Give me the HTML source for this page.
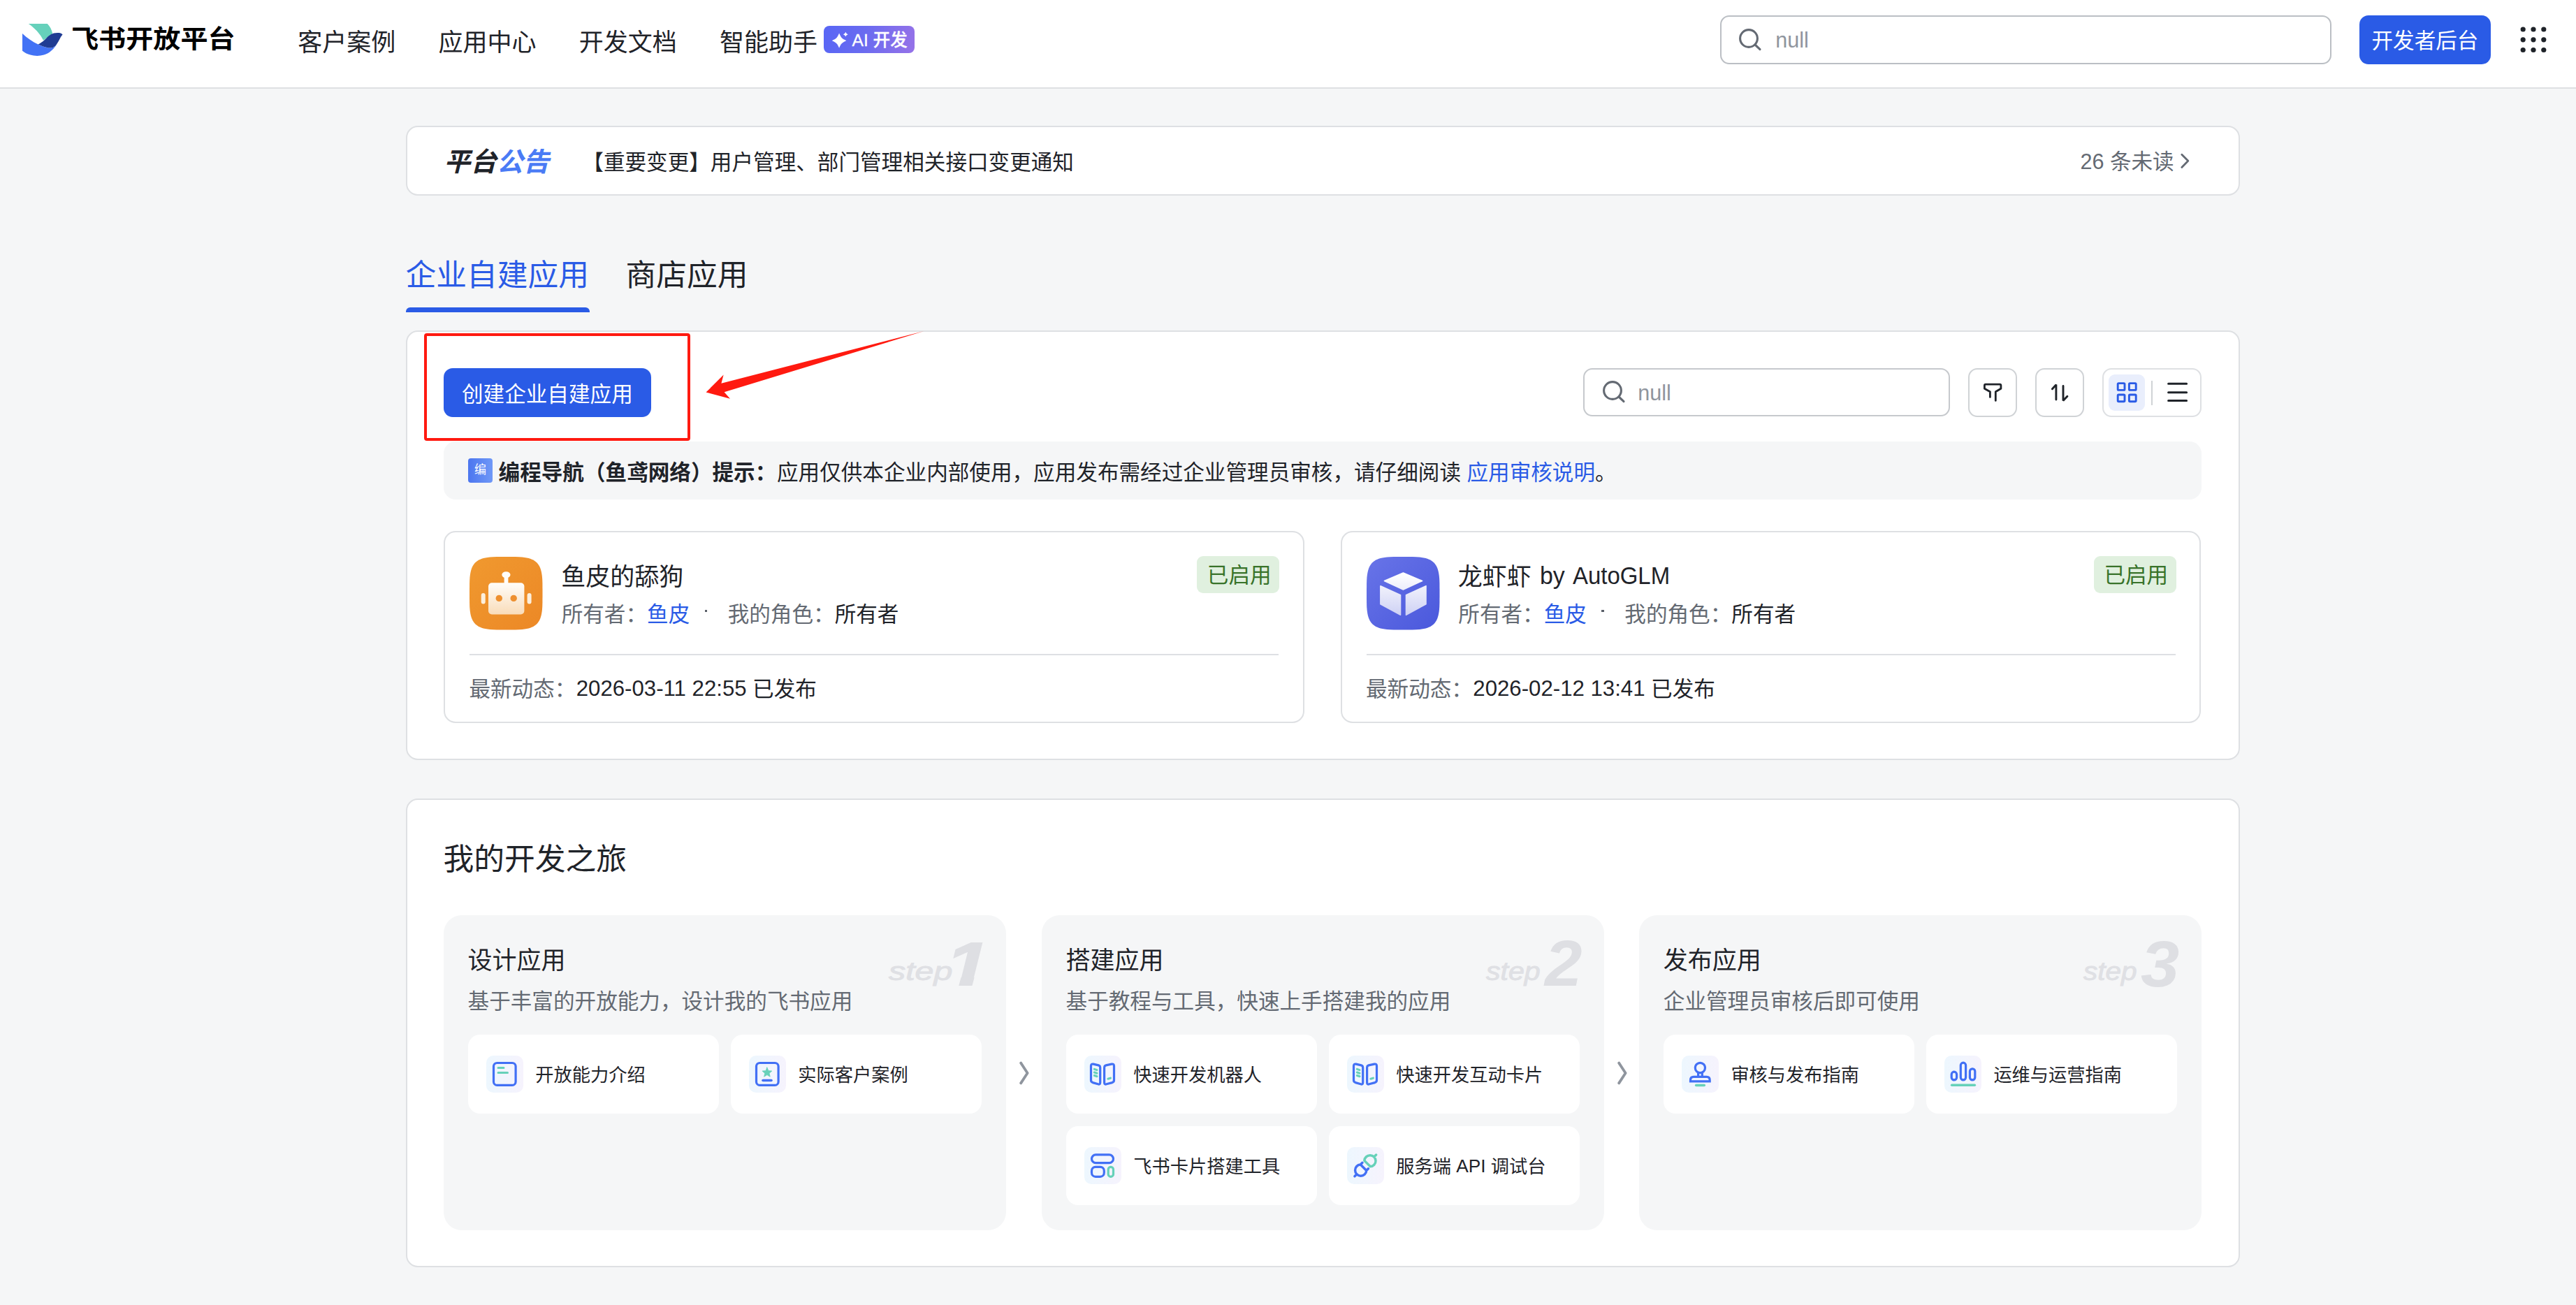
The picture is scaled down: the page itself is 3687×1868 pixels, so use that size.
<!DOCTYPE html>
<html lang="zh-CN">
<head>
<meta charset="utf-8">
<title>飞书开放平台</title>
<style>
*{box-sizing:border-box;margin:0;padding:0}
html,body{width:3687px;height:1868px;overflow:hidden;background:#f5f6f7}
body{position:relative;font-family:"Liberation Sans","Noto Sans CJK SC",sans-serif;color:#1f2329}
.a{position:absolute}
.t{position:absolute;white-space:nowrap;line-height:1}
.f35{font-size:35px}
.f30{font-size:30.6px}
.f26{font-size:26.25px}
.f43{font-size:43.75px}
.g{color:#646a73}
.b{color:#2a5be6}
.n{position:relative;top:-1.6px;font-size:31.2px}
.card{position:absolute;background:#fff;border:2px solid #dee0e3;border-radius:17px}
svg{position:absolute;overflow:visible}
#hd{left:0;top:0;width:3687px;height:127px;background:#fff;border-bottom:2px solid #dee0e3}
.sbox{position:absolute;background:#fff;border:2px solid #bbbfc4;border-radius:13px}
.btn{position:absolute;background:#2a5be6;border-radius:13px;color:#fff}
.ibtn{position:absolute;background:#fff;border:2px solid #d0d3d6;border-radius:13px}
.panel{position:absolute;background:#f5f6f7;border-radius:26px;top:1310px;height:450.5px;width:804.7px}
.item{position:absolute;background:#fff;border-radius:17px;width:358.6px;height:112.6px}
.ibg{position:absolute;left:26.3px;top:30px;width:52.5px;height:52.5px;border-radius:10px;background:linear-gradient(90deg,#edf7fe 0%,#f6f3fd 100%)}
.item .t{left:96.2px;top:45.1px;font-size:26.25px}
.ibg svg{left:0;top:0;width:52.5px;height:52.5px}
.tag{position:absolute;background:#e0f0df;border-radius:9px;width:118px;height:53px;color:#38732a;font-size:30.6px;line-height:1;white-space:nowrap;padding:12px 0 0 14.8px}
.step{position:absolute;white-space:nowrap;line-height:1;font-style:italic;color:#dfe0e4}
.num{font-weight:bold;font-size:89px;color:#dedfe3;transform-origin:0 0}
</style>
</head>
<body>
<div id="hd" class="a"></div>
<svg class="a" style="left:0;top:0" width="120" height="120" viewBox="0 0 120 120">
 <path d="M40.8 34.1 L67.8 34.1 C71.5 37.5 74 43 75.2 47.9 L62 57.7 C57.5 48.5 49.5 40 40.8 34.1 Z" fill="#66d1bb"/>
 <path d="M32 47.9 C39 54.5 46.5 59.5 54.6 63.5 C60 66.2 65 67.8 69 68.4 C72.5 68.9 75 68.4 77.6 67.2 L82 62 C78 69.5 70.5 76.5 62.9 78.6 C56 80.6 49 80.2 43.5 78.6 C39 77.3 35 75.2 32 72.7 Z" fill="#4272f5"/>
 <path d="M54.6 63.5 C58 61.8 60.5 60 62.9 58 C65.5 55.8 67 53.6 69.6 51.6 C72 49.7 74.5 48.3 77 47.6 C79.5 46.9 82 46.8 84.4 47 C86.5 47.3 88.3 48.2 89.6 49.4 C87.5 51.5 86.2 54.2 85 56.8 C83.8 59.2 82.7 61.2 81.3 62.9 C80 64.7 78.6 66.2 77 67.2 C74.7 68.6 72 68.8 69 68.4 C66.3 68 64 67.5 61.7 66.6 C59.3 65.7 56.9 64.6 54.6 63.5 Z" fill="#203c93"/>
</svg>
<div class="t" style="left:101.5px;top:37.5px;font-size:38.8px;font-weight:bold;color:#000;transform:scale(1.008,.94);transform-origin:0 50%">飞书开放平台</div>
<div class="t f35" style="left:426.2px;top:42.7px">客户案例</div>
<div class="t f35" style="left:627.5px;top:42.7px">应用中心</div>
<div class="t f35" style="left:828.7px;top:42.7px">开发文档</div>
<div class="t f35" style="left:1030px;top:42.7px">智能助手</div>
<div class="a" style="left:1179px;top:37px;width:130px;height:39px;border-radius:8px;background:linear-gradient(100deg,#5866f5 0%,#6a6bf0 45%,#9672e8 100%)"></div>
<svg style="left:0;top:0" width="1400" height="120" viewBox="0 0 1400 120"><path d="M1201.1 47.6 C1203.984 54.3416 1204.8491999999999 55.232 1211.3999999999999 58.2 C1204.8491999999999 61.168000000000006 1203.984 62.058400000000006 1201.1 68.8 C1198.216 62.058400000000006 1197.3508 61.168000000000006 1190.8 58.2 C1197.3508 55.232 1198.216 54.3416 1201.1 47.6 Z" fill="#fff"/><path d="M1210.3 45.800000000000004 C1211.252 47.9624 1211.5375999999999 48.248000000000005 1213.7 49.2 C1211.5375999999999 50.152 1211.252 50.4376 1210.3 52.6 C1209.348 50.4376 1209.0624 50.152 1206.8999999999999 49.2 C1209.0624 48.248000000000005 1209.348 47.9624 1210.3 45.800000000000004 Z" fill="#fff"/></svg>
<div class="t" style="left:1219.5px;top:46px;color:#fff;font-size:24.6px;font-weight:500;-webkit-text-stroke:.3px #fff">AI 开发</div>
<div class="sbox" style="left:2462px;top:22px;width:874.5px;height:69.5px"></div>
<svg style="left:2485px;top:38px" width="40" height="40" viewBox="0 0 40 40"><circle cx="18" cy="17" r="12.4" fill="none" stroke="#646a73" stroke-width="3.1"/><path d="M27 26 L34 32.6" stroke="#646a73" stroke-width="3.1" stroke-linecap="round"/></svg>
<div class="t f30" style="left:2541.3px;top:42.4px;color:#8f959e">null</div>
<div class="btn" style="left:3377px;top:22px;width:188px;height:69.6px"></div>
<div class="t f30" style="left:3394.5px;top:42.6px;color:#fff">开发者后台</div>
<svg style="left:3600px;top:30px" width="56" height="56" viewBox="0 0 56 56" fill="#1f2329">
 <circle cx="11.2" cy="12" r="3.6"/><circle cx="26" cy="12" r="3.6"/><circle cx="40.8" cy="12" r="3.6"/>
 <circle cx="11.2" cy="26.8" r="3.6"/><circle cx="26" cy="26.8" r="3.6"/><circle cx="40.8" cy="26.8" r="3.6"/>
 <circle cx="11.2" cy="41.5" r="3.6"/><circle cx="26" cy="41.5" r="3.6"/><circle cx="40.8" cy="41.5" r="3.6"/>
</svg>
<!-- ANNOUNCEMENT -->
<div class="card" style="left:581px;top:180px;width:2625px;height:99.5px"></div>
<div class="t" style="left:635.5px;top:213.7px;font-size:37.7px;font-weight:bold;font-style:italic;color:#1f2329">平台<span style="color:#4a7bf5">公告</span></div>
<div class="t f30" style="left:833.3px;top:216.9px">【重要变更】用户管理、部门管理相关接口变更通知</div>
<div class="t f30 g" style="left:2977.4px;top:216.3px">26 条未读</div>
<svg style="left:3116px;top:214px" width="24" height="32" viewBox="0 0 24 32"><path d="M6.8 7.2 L15.8 16.3 L6.8 25.4" fill="none" stroke="#646a73" stroke-width="2.8" stroke-linecap="round" stroke-linejoin="round"/></svg>
<!-- TABS -->
<div class="t f43 b" style="left:580.5px;top:371.5px">企业自建应用</div>
<div class="t f43" style="left:895.5px;top:371.5px">商店应用</div>
<div class="a" style="left:581px;top:440px;width:262.5px;height:6.5px;background:#2a5be6;border-radius:6px 6px 0 0"></div>
<!-- MAIN CARD -->
<div class="card" style="left:581px;top:473px;width:2625px;height:614.5px"></div>
<div class="btn" style="left:634.8px;top:527px;width:297.4px;height:70px"></div>
<div class="t f30" style="left:661px;top:548.6px;color:#fff">创建企业自建应用</div>
<div class="a" style="left:606.6px;top:477.3px;width:381px;height:154px;border:4.6px solid #ff1a10;border-radius:4px"></div>
<svg style="left:0;top:0" width="3687" height="700" viewBox="0 0 3687 700"><path d="M1010.5 561.6 L1035.6 536.6 L1032.4 548.7 L1322.4 474 L1036.6 561.3 L1045 570.8 Z" fill="#ff1a10"/></svg>
<div class="sbox" style="left:2266.3px;top:527.2px;width:524.6px;height:69.2px;border-color:#c6c9cd"></div>
<svg style="left:2289.5px;top:541.7px" width="40" height="40" viewBox="0 0 40 40"><circle cx="18" cy="17" r="12.4" fill="none" stroke="#646a73" stroke-width="3.1"/><path d="M27 26 L34 32.6" stroke="#646a73" stroke-width="3.1" stroke-linecap="round"/></svg>
<div class="t f30" style="left:2344.3px;top:546.9px;color:#8f959e">null</div>
<div class="ibtn" style="left:2817px;top:527.3px;width:69.6px;height:69.4px"></div>
<svg style="left:2817px;top:527.3px" width="70" height="70" viewBox="0 0 70 70"><path d="M24.9 23.2 L45.4 23.2 Q46.9 23.2 46.9 24.7 L46.9 29.2 L39.3 33.8 L39.3 46.4 M31.4 41.4 L31.4 33.8 L23.4 29.2 L23.4 24.7 Q23.4 23.2 24.9 23.2" fill="none" stroke="#1f2329" stroke-width="2.8" stroke-linecap="round" stroke-linejoin="round"/></svg>
<div class="ibtn" style="left:2913.3px;top:527.3px;width:69.6px;height:69.4px"></div>
<svg style="left:2913.3px;top:527.3px" width="70" height="70" viewBox="0 0 70 70"><path d="M29.9 45 L29.9 23.6 L24.4 29.8 M40 25.4 L40 46.4 L45.9 40.2" fill="none" stroke="#1f2329" stroke-width="2.9" stroke-linecap="round" stroke-linejoin="bevel"/></svg>
<div class="ibtn" style="left:3008.9px;top:527.3px;width:141.8px;height:69.4px;border-color:#dee0e3"></div>
<div class="a" style="left:3018.2px;top:535.9px;width:51.8px;height:52.2px;background:#e9eefc;border-radius:9px"></div>
<svg style="left:3018.2px;top:535.9px" width="52" height="52" viewBox="0 0 52 52" fill="none" stroke="#2a5be6" stroke-width="2.9"><rect x="13.2" y="12.6" width="9.8" height="9.8" rx="1.2"/><rect x="29.4" y="12.6" width="9.8" height="9.8" rx="1.2"/><rect x="13.2" y="29" width="9.8" height="9.8" rx="1.2"/><rect x="29.4" y="29" width="9.8" height="9.8" rx="1.2"/></svg>
<div class="a" style="left:3079.2px;top:545.3px;width:2px;height:34.7px;background:#d0d3d6"></div>
<svg style="left:3090px;top:535.9px" width="52" height="52" viewBox="0 0 52 52"><path d="M13.6 13.3 L39.6 13.3 M13.6 25.7 L39.6 25.7 M13.6 37.6 L39.6 37.6" stroke="#1f2329" stroke-width="3" stroke-linecap="round"/></svg>
<!-- TIP -->
<div class="a" style="left:634.9px;top:632.4px;width:2515.7px;height:82.6px;background:#f5f6f7;border-radius:17px"></div>
<div class="a" style="left:669.7px;top:656.4px;width:35.4px;height:34.6px;border-radius:4px;background:linear-gradient(90deg,#4c76ef,#6f98f7);color:#fff;font-size:17px;line-height:34.6px;text-align:center">编</div>
<div class="t f30" style="left:713.6px;top:661px;font-weight:bold">编程导航（鱼鸢网络）提示：</div>
<div class="t f30" style="left:1112px;top:661px">应用仅供本企业内部使用，应用发布需经过企业管理员审核，请仔细阅读 <span class="b">应用审核说明</span>。</div>
<!-- APP CARDS -->
<div class="card" style="left:635.2px;top:759.5px;width:1231.5px;height:275px"></div>
<svg style="left:671.9000000000001px;top:796.5px" width="104.5" height="104.5" viewBox="0 0 104.5 104.5">
<defs><linearGradient id="og" x1="0" y1="0" x2="1" y2="1"><stop offset="0" stop-color="#f0992f"/><stop offset="1" stop-color="#ec8826"/></linearGradient>
<linearGradient id="ow" x1="0" y1="0" x2="0" y2="1"><stop offset="0" stop-color="#fffdf9"/><stop offset="1" stop-color="#f9dcb9"/></linearGradient></defs>
<path d="M104.50 52.25 L104.44 65.61 L104.28 71.13 L104.00 75.33 L103.60 78.83 L103.09 81.87 L102.47 84.57 L101.73 87.00 L100.87 89.20 L99.89 91.20 L98.79 93.02 L97.56 94.68 L96.19 96.19 L94.68 97.56 L93.02 98.79 L91.20 99.89 L89.20 100.87 L87.00 101.73 L84.57 102.47 L81.87 103.09 L78.83 103.60 L75.33 104.00 L71.13 104.28 L65.61 104.44 L52.25 104.50 L38.89 104.44 L33.37 104.28 L29.17 104.00 L25.67 103.60 L22.63 103.09 L19.93 102.47 L17.50 101.73 L15.30 100.87 L13.30 99.89 L11.48 98.79 L9.82 97.56 L8.31 96.19 L6.94 94.68 L5.71 93.02 L4.61 91.20 L3.63 89.20 L2.77 87.00 L2.03 84.57 L1.41 81.87 L0.90 78.83 L0.50 75.33 L0.22 71.13 L0.06 65.61 L0.00 52.25 L0.06 38.89 L0.22 33.37 L0.50 29.17 L0.90 25.67 L1.41 22.63 L2.03 19.93 L2.77 17.50 L3.63 15.30 L4.61 13.30 L5.71 11.48 L6.94 9.82 L8.31 8.31 L9.82 6.94 L11.48 5.71 L13.30 4.61 L15.30 3.63 L17.50 2.77 L19.93 2.03 L22.63 1.41 L25.67 0.90 L29.17 0.50 L33.37 0.22 L38.89 0.06 L52.25 0.00 L65.61 0.06 L71.13 0.22 L75.33 0.50 L78.83 0.90 L81.87 1.41 L84.57 2.03 L87.00 2.77 L89.20 3.63 L91.20 4.61 L93.02 5.71 L94.68 6.94 L96.19 8.31 L97.56 9.82 L98.79 11.48 L99.89 13.30 L100.87 15.30 L101.73 17.50 L102.47 19.93 L103.09 22.63 L103.60 25.67 L104.00 29.17 L104.28 33.37 L104.44 38.89 Z" fill="url(#og)"/>
<ellipse cx="52.4" cy="25.8" rx="6.1" ry="4.6" fill="#fffdf9"/><rect x="49.6" y="27" width="5.8" height="11" fill="#fffdf9"/>
<rect x="27" y="37.2" width="51.4" height="45.2" rx="5" fill="url(#ow)"/>
<rect x="16.7" y="52" width="6" height="15.4" rx="3" fill="#fcefdc"/><rect x="82.6" y="52" width="6" height="15.4" rx="3" fill="#fcefdc"/>
<circle cx="42.3" cy="59.4" r="4.7" fill="#ee9030"/><circle cx="63.2" cy="59.4" r="4.7" fill="#ee9030"/>
</svg>
<div class="t f35" style="left:803.2px;top:808px">鱼皮的舔狗</div>
<div class="t f30 g" style="left:803.7px;top:863.8px">所有者：</div>
<div class="t f30 b" style="left:926.1px;top:863.8px">鱼皮</div>
<div class="a" style="left:1008.6px;top:872.8px;width:3.6px;height:3.6px;background:#5a6069"></div>
<div class="t f30 g" style="left:1041.7px;top:863.8px">我的角色：</div>
<div class="t f30" style="left:1194.7px;top:863.8px">所有者</div>
<div class="tag" style="left:1713.0px;top:796px">已启用</div>
<div class="a" style="left:671.9000000000001px;top:935.5px;width:1158px;height:2px;background:#dee0e3"></div>
<div class="t f30 g" style="left:671.4000000000001px;top:971.4px">最新动态：</div>
<div class="t f30" style="left:824.7px;top:971.4px"><span class="n">2026-03-11 22:55</span> 已发布</div>
<div class="card" style="left:1918.8px;top:759.5px;width:1231.5px;height:275px"></div>
<svg style="left:1955.5px;top:796.5px" width="104.5" height="104.5" viewBox="0 0 104.5 104.5">
<defs><linearGradient id="pg" x1="0" y1="0" x2="1" y2="1"><stop offset="0" stop-color="#6874e8"/><stop offset="1" stop-color="#4a58dc"/></linearGradient>
<linearGradient id="pw" gradientUnits="userSpaceOnUse" x1="0" y1="36" x2="0" y2="96"><stop offset="0" stop-color="#ffffff"/><stop offset="1" stop-color="#cdd0f4"/></linearGradient></defs>
<path d="M104.50 52.25 L104.44 65.61 L104.28 71.13 L104.00 75.33 L103.60 78.83 L103.09 81.87 L102.47 84.57 L101.73 87.00 L100.87 89.20 L99.89 91.20 L98.79 93.02 L97.56 94.68 L96.19 96.19 L94.68 97.56 L93.02 98.79 L91.20 99.89 L89.20 100.87 L87.00 101.73 L84.57 102.47 L81.87 103.09 L78.83 103.60 L75.33 104.00 L71.13 104.28 L65.61 104.44 L52.25 104.50 L38.89 104.44 L33.37 104.28 L29.17 104.00 L25.67 103.60 L22.63 103.09 L19.93 102.47 L17.50 101.73 L15.30 100.87 L13.30 99.89 L11.48 98.79 L9.82 97.56 L8.31 96.19 L6.94 94.68 L5.71 93.02 L4.61 91.20 L3.63 89.20 L2.77 87.00 L2.03 84.57 L1.41 81.87 L0.90 78.83 L0.50 75.33 L0.22 71.13 L0.06 65.61 L0.00 52.25 L0.06 38.89 L0.22 33.37 L0.50 29.17 L0.90 25.67 L1.41 22.63 L2.03 19.93 L2.77 17.50 L3.63 15.30 L4.61 13.30 L5.71 11.48 L6.94 9.82 L8.31 8.31 L9.82 6.94 L11.48 5.71 L13.30 4.61 L15.30 3.63 L17.50 2.77 L19.93 2.03 L22.63 1.41 L25.67 0.90 L29.17 0.50 L33.37 0.22 L38.89 0.06 L52.25 0.00 L65.61 0.06 L71.13 0.22 L75.33 0.50 L78.83 0.90 L81.87 1.41 L84.57 2.03 L87.00 2.77 L89.20 3.63 L91.20 4.61 L93.02 5.71 L94.68 6.94 L96.19 8.31 L97.56 9.82 L98.79 11.48 L99.89 13.30 L100.87 15.30 L101.73 17.50 L102.47 19.93 L103.09 22.63 L103.60 25.67 L104.00 29.17 L104.28 33.37 L104.44 38.89 Z" fill="url(#pg)"/>
<g transform="translate(-13 -11.5)" fill="url(#pw)" stroke="url(#pw)" stroke-width="1.6" stroke-linejoin="round">
<path d="M65.4 34.5 L92.6 46 L65.4 58.5 L38.4 46 Z"/>
<path d="M32.9 53.2 L61.5 66.2 L61.5 94.8 L32.9 79.2 Z"/>
<path d="M69.5 66.2 L98 53.2 L98 79.2 L69.5 94.8 Z"/>
</g></svg>
<div class="t f35" style="left:2086.8px;top:808px">龙虾虾 <span class="n" style="display:inline-block;font-size:35px;top:-2.5px;margin-left:2px;transform:scaleX(.968);transform-origin:0 50%">by</span> <span class="n" style="display:inline-block;font-size:35px;top:-2.5px;margin-left:.8px;transform:scaleX(.941);transform-origin:0 50%">AutoGLM</span></div>
<div class="t f30 g" style="left:2087.3px;top:863.8px">所有者：</div>
<div class="t f30 b" style="left:2209.7px;top:863.8px">鱼皮</div>
<div class="a" style="left:2292.2px;top:872.8px;width:3.6px;height:3.6px;background:#5a6069"></div>
<div class="t f30 g" style="left:2325.3px;top:863.8px">我的角色：</div>
<div class="t f30" style="left:2478.3px;top:863.8px">所有者</div>
<div class="tag" style="left:2996.6px;top:796px">已启用</div>
<div class="a" style="left:1955.5px;top:935.5px;width:1158px;height:2px;background:#dee0e3"></div>
<div class="t f30 g" style="left:1955.0px;top:971.4px">最新动态：</div>
<div class="t f30" style="left:2108.3px;top:971.4px"><span class="n">2026-02-12 13:41</span> 已发布</div>
<!-- JOURNEY -->
<div class="card" style="left:581px;top:1142.8px;width:2625px;height:671.2px"></div>
<div class="t f43" style="left:634.5px;top:1208.4px">我的开发之旅</div>
<div class="panel" style="left:635px"></div>
<div class="t f35" style="left:669.6px;top:1357.4px">设计应用</div>
<div class="t f30 g" style="left:669.6px;top:1417.9px">基于丰富的开放能力，设计我的飞书应用</div>
<div class="step" style="left:1271.7px;top:1371.8px;font-size:37.2px;-webkit-text-stroke:0.9px #dfe0e4;transform:scaleX(1.3);transform-origin:0 0">step</div>
<div class="step num" style="left:1354.45px;top:1335.8px;transform:scale(1.25,.986);-webkit-text-stroke:2px #dedfe3;clip-path:polygon(-5px 0,60px 0,60px 62px,32.9px 62px,29.5px 78px,14.2px 78px,17.6px 62px,-5px 62px)">1</div>
<div class="item" style="left:670px;top:1481px"><div class="ibg"><svg viewBox="0 0 52.5 52.5" fill="none" stroke-width="3.2" stroke-linecap="round" stroke-linejoin="round"><rect x="10.5" y="10.5" width="31.6" height="31.9" rx="5" stroke="#4270f5"/><path d="M17 17.6 L25 17.6 M17 24.6 L30.5 24.6" stroke="#66d1b9" stroke-width="3"/></svg></div><div class="t">开放能力介绍</div></div>
<div class="item" style="left:1046px;top:1481px"><div class="ibg"><svg viewBox="0 0 52.5 52.5" fill="none" stroke-width="3.2" stroke-linecap="round" stroke-linejoin="round"><rect x="10.5" y="10.5" width="31.6" height="31.9" rx="5" stroke="#4270f5"/><polygon points="25.90,17.00 27.84,21.63 32.84,22.04 29.04,25.32 30.19,30.21 25.90,27.60 21.61,30.21 22.76,25.32 18.96,22.04 23.96,21.63" fill="#66d1b9" stroke="#66d1b9" stroke-width="0.8"/><path d="M20 35.5 L32 35.5" stroke="#4270f5" stroke-width="3.6"/></svg></div><div class="t">实际客户案例</div></div>
<svg style="left:1454.3px;top:1514px" width="24" height="44" viewBox="0 0 24 44"><path d="M7.2 7.6 L16.6 22 L7.2 36.4" fill="none" stroke="#8f959e" stroke-width="3.8" stroke-linecap="round" stroke-linejoin="round"/></svg>
<div class="panel" style="left:1491px"></div>
<div class="t f35" style="left:1525.6px;top:1357.4px">搭建应用</div>
<div class="t f30 g" style="left:1525.6px;top:1417.9px">基于教程与工具，快速上手搭建我的应用</div>
<div class="step" style="left:2127.2px;top:1371.8px;font-size:37.2px;-webkit-text-stroke:0.9px #dfe0e4;transform:scaleX(1.105);transform-origin:0 0">step</div>
<div class="step num" style="left:2210.5px;top:1333.2px;transform:scale(1.08,1.035)">2</div>
<div class="item" style="left:1526px;top:1481px"><div class="ibg"><svg viewBox="0 0 52.5 52.5" fill="none" stroke-width="3.2" stroke-linecap="round" stroke-linejoin="round"><path d="M9.5 14.9 Q9.5 11.4 12.9 12.1 L20.3 13.9 Q22.7 14.5 22.7 17 L22.7 38.5 Q22.7 41.8 19.5 40.8 L12 38.6 Q9.5 37.8 9.5 35.3 Z" stroke="#4270f5"/><path d="M42.5 14.9 Q42.5 11.4 39.1 12.1 L31 13.9 Q28.6 14.5 28.6 17 L28.6 38.5 Q28.6 41.8 31.8 40.8 L40 38.6 Q42.5 37.8 42.5 35.3 Z" stroke="#4270f5"/><path d="M14.4 19.4 L18 20.6 M14.4 24 L18 25.2 M14.4 28.5 L18 29.7 M33.9 33.2 L37.4 32.2" stroke="#66d1b9" stroke-width="3.1"/></svg></div><div class="t">快速开发机器人</div></div>
<div class="item" style="left:1902px;top:1481px"><div class="ibg"><svg viewBox="0 0 52.5 52.5" fill="none" stroke-width="3.2" stroke-linecap="round" stroke-linejoin="round"><path d="M9.5 14.9 Q9.5 11.4 12.9 12.1 L20.3 13.9 Q22.7 14.5 22.7 17 L22.7 38.5 Q22.7 41.8 19.5 40.8 L12 38.6 Q9.5 37.8 9.5 35.3 Z" stroke="#4270f5"/><path d="M42.5 14.9 Q42.5 11.4 39.1 12.1 L31 13.9 Q28.6 14.5 28.6 17 L28.6 38.5 Q28.6 41.8 31.8 40.8 L40 38.6 Q42.5 37.8 42.5 35.3 Z" stroke="#4270f5"/><path d="M14.4 19.4 L18 20.6 M14.4 24 L18 25.2 M14.4 28.5 L18 29.7 M33.9 33.2 L37.4 32.2" stroke="#66d1b9" stroke-width="3.1"/></svg></div><div class="t">快速开发互动卡片</div></div>
<div class="item" style="left:1526px;top:1612px"><div class="ibg"><svg viewBox="0 0 52.5 52.5" fill="none" stroke-width="3.2" stroke-linecap="round" stroke-linejoin="round"><rect x="10.5" y="10.8" width="31" height="11.9" rx="5.9" stroke="#4270f5"/><rect x="10.5" y="28.3" width="17.8" height="14" rx="5.6" stroke="#4270f5"/><rect x="34.2" y="28.3" width="7.3" height="14" rx="3.65" stroke="#66d1b9"/></svg></div><div class="t">飞书卡片搭建工具</div></div>
<div class="item" style="left:1902px;top:1612px"><div class="ibg"><svg viewBox="0 0 52.5 52.5" fill="none" stroke-width="3.2" stroke-linecap="round" stroke-linejoin="round"><g transform="translate(19.7 33.0) rotate(-45)"><path d="M5.4 -6.0 A8.1 8.1 0 1 0 5.4 6.0 Z M-8.1 0 L-12.4 0 M5.4 -6.0 L9.2 -6.0 M5.4 6.0 L9.2 6.0" stroke="#4270f5" stroke-width="3.5"/></g><g transform="translate(32.9 19.8) rotate(135)"><path d="M5.4 -6.0 A8.1 8.1 0 1 0 5.4 6.0 Z M-8.1 0 L-12.4 0 " stroke="#66d1b9" stroke-width="3.5"/></g></svg></div><div class="t">服务端 <span style="position:relative;top:-1px">API</span> 调试台</div></div>
<svg style="left:2309.5px;top:1514px" width="24" height="44" viewBox="0 0 24 44"><path d="M7.2 7.6 L16.6 22 L7.2 36.4" fill="none" stroke="#8f959e" stroke-width="3.8" stroke-linecap="round" stroke-linejoin="round"/></svg>
<div class="panel" style="left:2346.2px"></div>
<div class="t f35" style="left:2380.7999999999997px;top:1357.4px">发布应用</div>
<div class="t f30 g" style="left:2380.7999999999997px;top:1417.9px">企业管理员审核后即可使用</div>
<div class="step" style="left:2982.2px;top:1371.8px;font-size:37.2px;-webkit-text-stroke:0.9px #dfe0e4;transform:scaleX(1.09);transform-origin:0 0">step</div>
<div class="step num" style="left:3064.1px;top:1333.1px;transform:scale(1.115,1.048)">3</div>
<div class="item" style="left:2381.2px;top:1481px"><div class="ibg"><svg viewBox="0 0 52.5 52.5" fill="none" stroke-width="3.2" stroke-linecap="round" stroke-linejoin="round"><circle cx="26.4" cy="17.5" r="7.1" stroke="#4270f5"/><path d="M23.6 24 L23.6 30 M29.3 24 L29.3 30" stroke="#4270f5"/><path d="M12.5 36.8 L12.5 34.9 Q12.5 30.3 17.1 30.3 L35.6 30.3 Q40.2 30.3 40.2 34.9 L40.2 36.8 Z" stroke="#4270f5" stroke-linejoin="miter"/><path d="M20.6 42.4 L32.3 42.4" stroke="#66d1b9" stroke-width="3.5"/></svg></div><div class="t">审核与发布指南</div></div>
<div class="item" style="left:2757.2px;top:1481px"><div class="ibg"><svg viewBox="0 0 52.5 52.5" fill="none" stroke-width="3.2" stroke-linecap="round" stroke-linejoin="round"><rect x="10.2" y="23.2" width="7.4" height="11.7" rx="3.7" stroke="#4270f5"/><rect x="23.3" y="10.2" width="7.3" height="24.7" rx="3.65" stroke="#4270f5"/><rect x="36.4" y="18.9" width="7.4" height="16" rx="3.7" stroke="#4270f5"/><path d="M10.6 42.3 L43.4 42.3" stroke="#66d1b9" stroke-width="3.5"/></svg></div><div class="t">运维与运营指南</div></div>
</body>
</html>
